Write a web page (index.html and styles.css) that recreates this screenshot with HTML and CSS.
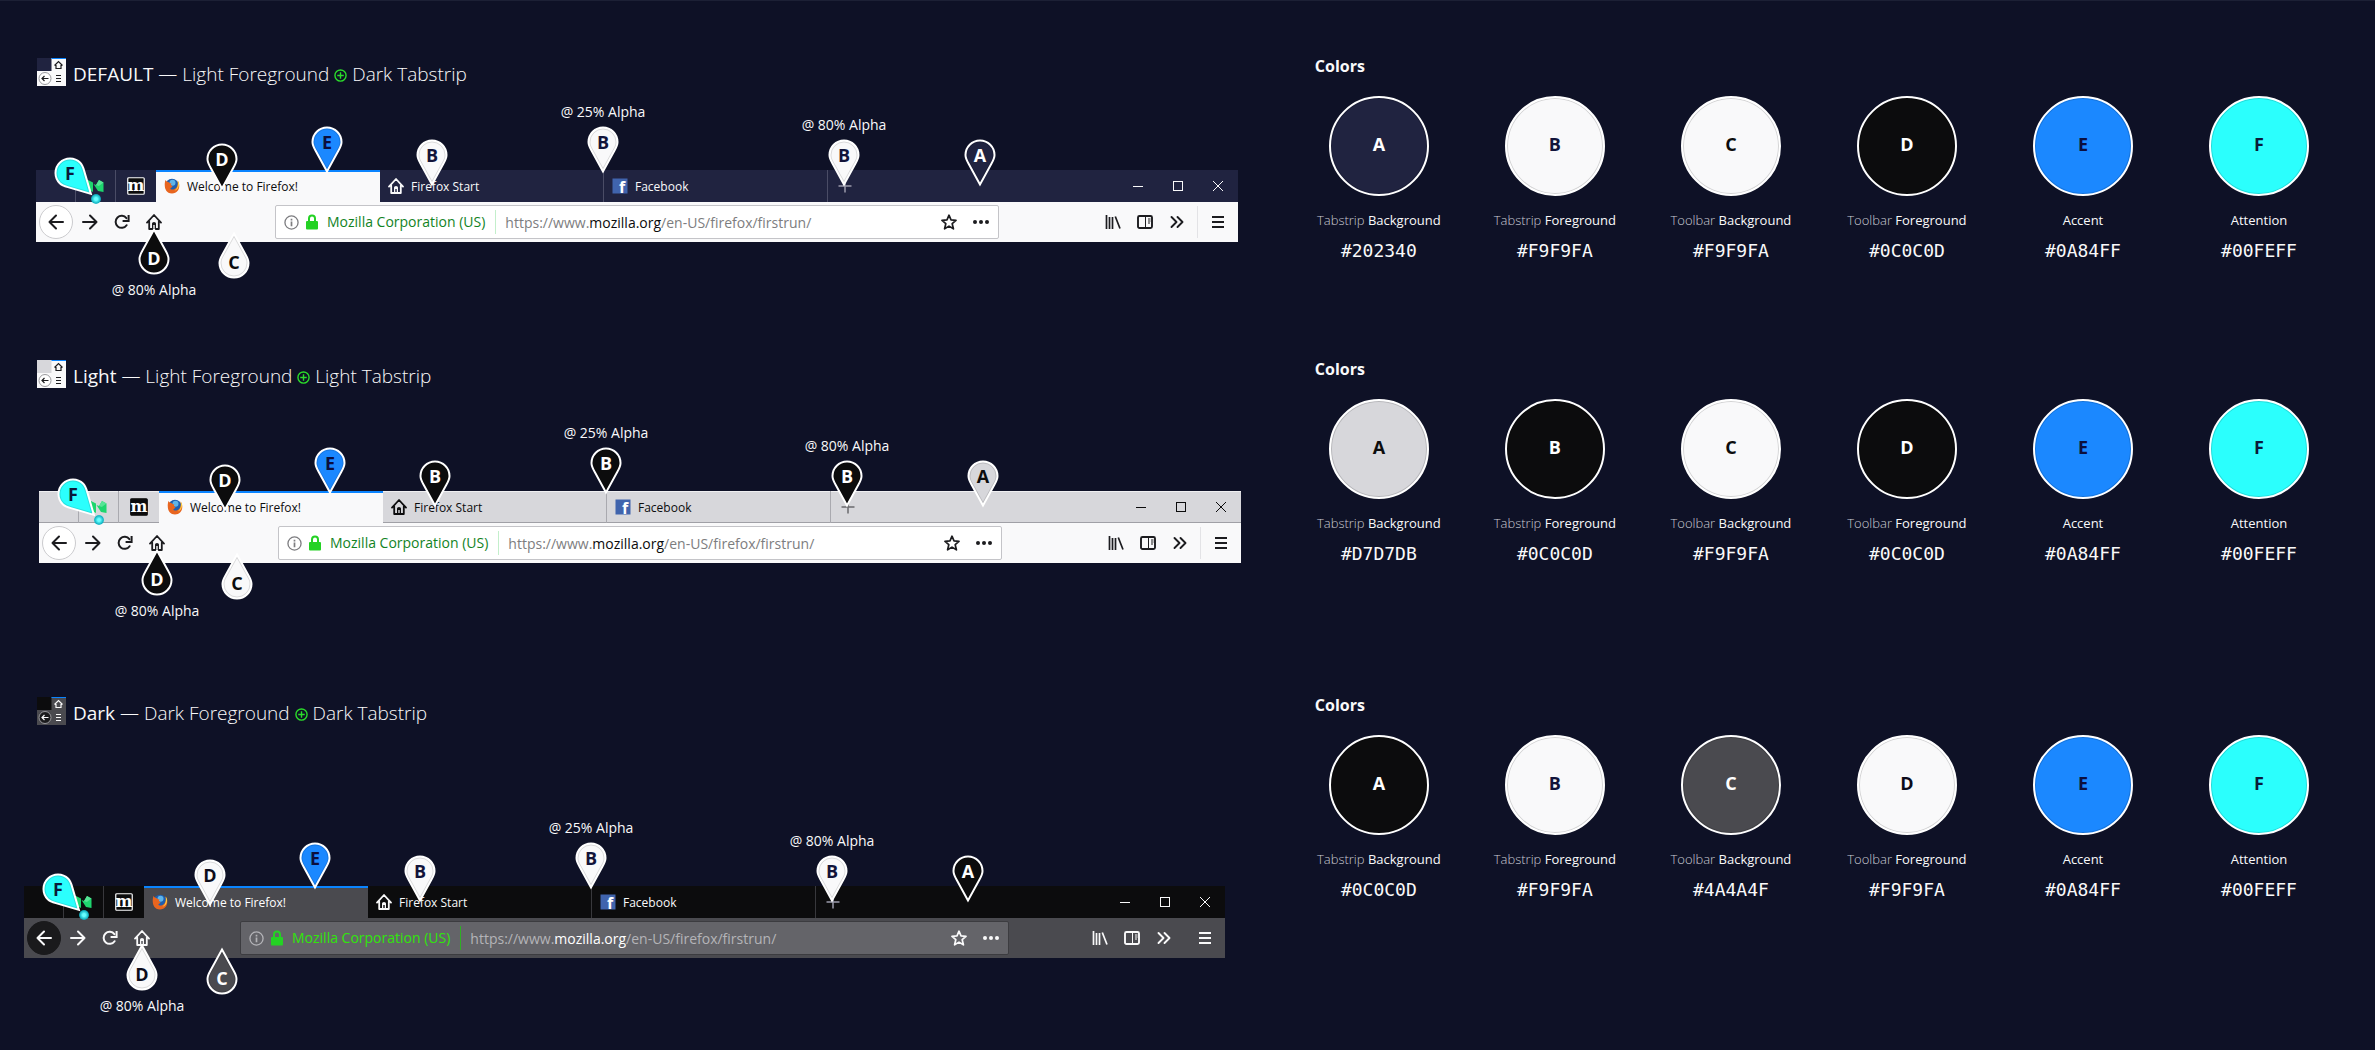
FILE: index.html
```
<!DOCTYPE html>
<html lang="en">
<head>
  <meta charset="UTF-8">
  <title>Themes</title>
  <meta name="viewport" content="width=device-width, initial-scale=1.0">
  <link rel="stylesheet" href="styles.css">
</head>
<body>
  <svg class="sprite" aria-hidden="true">
    <symbol id="back" viewBox="0 0 16 16"><path d="M15 8H1.5M8 1.5L1.5 8L8 14.5" fill="none" stroke="currentColor" stroke-width="2" stroke-linecap="round" stroke-linejoin="round"/></symbol>
    <symbol id="forward" viewBox="0 0 16 16"><path d="M1 8H14.5M8 1.5L14.5 8L8 14.5" fill="none" stroke="currentColor" stroke-width="2" stroke-linecap="round" stroke-linejoin="round"/></symbol>
    <symbol id="reload" viewBox="0 0 16 16"><path d="M12.6 11.2A6 6 0 1 1 12.4 4.2" fill="none" stroke="currentColor" stroke-width="2" stroke-linecap="round"/><path d="M14.6 1V7H8.6" fill="none" stroke="currentColor" stroke-width="2"/></symbol>
    <symbol id="home" viewBox="0 0 16 16"><path d="M1 8.6L8 1L15 8.6M3.2 7.5V15H12.8V7.5" fill="none" stroke="currentColor" stroke-width="1.8" stroke-linecap="round" stroke-linejoin="round"/><path d="M6 15V9.5Q6 8 8 8T10 9.5V15H8.7V11H7.3V15Z" fill="currentColor"/></symbol>
    <symbol id="info" viewBox="0 0 16 16"><circle cx="8" cy="8" r="7" fill="none" stroke="currentColor" stroke-width="1.4"/><path d="M8 7V12M8 4V5.8" stroke="currentColor" stroke-width="1.8"/></symbol>
    <symbol id="lock" viewBox="0 0 14 16"><rect x="1" y="7" width="12" height="8.5" rx="1" fill="currentColor"/><path d="M4 8V4.5A3 3 0 0 1 10 4.5V8" fill="none" stroke="currentColor" stroke-width="2"/></symbol>
    <symbol id="star" viewBox="0 0 16 16"><path d="M8 1.2L10 5.9L15 6.4L11.2 9.7L12.4 14.8L8 12.1L3.6 14.8L4.8 9.7L1 6.4L6 5.9Z" fill="none" stroke="currentColor" stroke-width="1.7" stroke-linejoin="round"/></symbol>
    <symbol id="dots" viewBox="0 0 16 16"><g fill="currentColor"><circle cx="2" cy="8" r="2"/><circle cx="8" cy="8" r="2"/><circle cx="14" cy="8" r="2"/></g></symbol>
    <symbol id="library" viewBox="0 0 16 16"><path d="M1.5 1V15M4.5 3V15M7.5 3V15M10.3 2.5L15 14.5" fill="none" stroke="currentColor" stroke-width="1.7"/></symbol>
    <symbol id="sidebar" viewBox="0 0 16 16"><rect x="1" y="2" width="14" height="12" rx="1.5" fill="none" stroke="currentColor" stroke-width="1.9"/><path d="M8.5 2V14M11 5H13.5M11 7H13.5M11 9H13" stroke="currentColor" stroke-width="1"/></symbol>
    <symbol id="chevrons" viewBox="0 0 16 16"><path d="M2.5 3L7.5 8L2.5 13M8.5 3L13.5 8L8.5 13" fill="none" stroke="currentColor" stroke-width="1.9" stroke-linecap="round" stroke-linejoin="round"/></symbol>
    <symbol id="menu" viewBox="0 0 16 16"><path d="M2 3H14M2 8H14M2 13H14" stroke="currentColor" stroke-width="2"/></symbol>
    <symbol id="plus" viewBox="0 0 16 16"><path d="M1.500 8H14.500M8 1.500V14.500" stroke="currentColor" stroke-width="1.500"/></symbol>
    <symbol id="win-min" viewBox="0 0 12 12"><path d="M1 6.500H11" stroke="currentColor"/></symbol>
    <symbol id="win-max" viewBox="0 0 12 12"><rect x="1.5" y="1.5" width="9" height="9" fill="none" stroke="currentColor"/></symbol>
    <symbol id="win-close" viewBox="0 0 12 12"><path d="M1 1L11 11M11 1L1 11" stroke="currentColor"/></symbol>
    <symbol id="oplus" viewBox="0 0 14 14"><path d="M7 1A6 6 0 1 0 7 13A6 6 0 1 0 7 1ZM7 3.5V10.5M3.5 7H10.5" fill="none" stroke="currentColor" stroke-width="1.5"/></symbol>
    <symbol id="medium" viewBox="0 0 16 16"><path d="M0 2L5 4.5V14L0 11.5ZM5.5 6L10 13L15.5 14V4.5L11 2L8 7Z" fill="#1ed66e"/><path d="M10.8 8L15.5 4.5L11 2L8 7Z" fill="#56e495"/></symbol>
    <symbol id="mdn" viewBox="0 0 18 18"><rect class="mdn-box" x=".75" y=".75" width="16.5" height="16.5" rx="1" fill="#0c0c0d" stroke-width="1.2"/><text x="9" y="13.5" text-anchor="middle" class="mdn-letter">m</text></symbol>
    <symbol id="firefox" viewBox="0 0 16 16"><circle cx="8" cy="7.5" r="6.8" fill="#1e5fb0"/><circle cx="8.5" cy="4.8" r="3" fill="#5fb4e8"/><path d="M1.5 2C0 6 0 15.5 8 15.5C15.5 15.5 17 6.5 13.5 2.5C14.5 6 13.5 10.5 9.5 11.5C6.500 12 5.5 10 7.5 9.5C8.5 9.2 9 8 7.5 7.5C6.5 7.2 7 6 7.5 5.500C5.5 5.5 4.8 4 3.5 3.8C2.8 3.6 2 3 1.5 2Z" fill="#e8651f"/><path d="M13.5 2.5C14.5 6 14 10 10.5 12.5C14 12 15.5 8 15 5C14.7 4 14.2 3.2 13.5 2.5Z" fill="#ffcf3f"/></symbol>
    <symbol id="facebook" viewBox="0 0 16 16"><rect x=".5" y=".5" width="15" height="15" fill="#4064ad"/><text x="10" y="15" text-anchor="middle" class="fb-letter">f</text></symbol>
    <symbol id="drop" viewBox="0 0 32 48"><path class="drop-edge" d="M16 45.5L4.5 24.5C2.500 21 1.5 19 1.5 16A14.5 14.5 0 0 1 30.5 16C30.5 19 29.5 21 27.5 24.5Z"/><path class="drop-line" d="M16 42.500L5.8 24C4 21 3 19 3 16A13 13 0 0 1 29 16C29 19 28 21 26.200 24Z"/></symbol>
    <symbol id="thumb" viewBox="0 0 29 28"><path class="thumb-bar" d="M0 0H29V28H0Z"/><path class="thumb-strip" d="M0 0H14.5V13H0Z"/><path d="M14.5 .5H29" stroke="#0a84ff"/><circle class="thumb-back" cx="8" cy="20.5" r="6"/><g fill="none" stroke="currentColor" stroke-width="1.2"><path d="M11.500 20.500H5M7.500 18L5 20.500L7.500 23M17.500 7.500L21.500 3.500L25.500 7.500M19 7V10.500H24V7M19 17.500H24M19 20.500H24M19 23.500H24"/></g></symbol>
  </svg>

  <main class="page">
    <!-- DEFAULT -->
    <section class="theme theme-default">
      <div class="preview">
        <h2 class="title"><svg class="thumb"><use href="#thumb"/></svg><span><b>DEFAULT</b> — Light Foreground <svg class="oplus"><use href="#oplus"/></svg> Dark Tabstrip</span></h2>
        <div class="browser">
          <div class="tabstrip">
            <span class="tab-gap"></span>
            <button class="tab tab-pinned" aria-label="Medium"><svg class="icon"><use href="#medium"/></svg></button>
            <button class="tab tab-pinned" aria-label="Mozilla"><svg class="icon icon-mdn"><use href="#mdn"/></svg></button>
            <button class="tab tab-active"><svg class="icon"><use href="#firefox"/></svg>Welcome to Firefox!</button>
            <button class="tab"><svg class="icon"><use href="#home"/></svg>Firefox Start</button>
            <button class="tab"><svg class="icon"><use href="#facebook"/></svg>Facebook</button>
            <button class="new-tab" aria-label="New tab"><svg class="icon"><use href="#plus"/></svg></button>
            <span class="window-buttons">
              <button aria-label="Minimize"><svg><use href="#win-min"/></svg></button>
              <button aria-label="Maximize"><svg><use href="#win-max"/></svg></button>
              <button aria-label="Close"><svg><use href="#win-close"/></svg></button>
            </span>
          </div>
          <div class="toolbar">
            <button class="tool tool-back" aria-label="Back"><svg class="icon"><use href="#back"/></svg></button>
            <button class="tool" aria-label="Forward"><svg class="icon"><use href="#forward"/></svg></button>
            <button class="tool" aria-label="Reload"><svg class="icon"><use href="#reload"/></svg></button>
            <button class="tool" aria-label="Home"><svg class="icon"><use href="#home"/></svg></button>
            <div class="urlbar">
              <svg class="info"><use href="#info"/></svg>
              <svg class="lock"><use href="#lock"/></svg>
              <span class="identity">Mozilla Corporation (US)</span>
              <span class="url">https://www.<b>mozilla.org</b>/en-US/firefox/firstrun/</span>
              <button class="tool" aria-label="Bookmark"><svg class="icon"><use href="#star"/></svg></button>
              <button class="tool" aria-label="Page actions"><svg class="icon"><use href="#dots"/></svg></button>
            </div>
            <button class="tool" aria-label="Library"><svg class="icon"><use href="#library"/></svg></button>
            <button class="tool" aria-label="Sidebars"><svg class="icon"><use href="#sidebar"/></svg></button>
            <button class="tool" aria-label="More tools"><svg class="icon"><use href="#chevrons"/></svg></button>
            <button class="tool tool-menu" aria-label="Menu"><svg class="icon"><use href="#menu"/></svg></button>
          </div>
          <i class="glow"></i>
          <span class="pin pin-attention f"><svg><use href="#drop"/></svg>F</span>
          <span class="pin pin-tab-text d"><svg><use href="#drop"/></svg>D</span>
          <span class="pin pin-accent e"><svg><use href="#drop"/></svg>E</span>
          <span class="pin pin-tab b"><svg><use href="#drop"/></svg>B</span>
          <span class="pin pin-separator b"><svg><use href="#drop"/></svg>B<small>@ 25% Alpha</small></span>
          <span class="pin pin-plus b"><svg><use href="#drop"/></svg>B<small>@ 80% Alpha</small></span>
          <span class="pin pin-strip a"><svg><use href="#drop"/></svg>A</span>
          <span class="pin pin-up pin-icon d"><svg><use href="#drop"/></svg>D<small>@ 80% Alpha</small></span>
          <span class="pin pin-up pin-bar c"><svg><use href="#drop"/></svg>C</span>
        </div>
      </div>
      <div class="palette">
        <h3>Colors</h3>
        <ul class="swatches">
          <li><span class="circle a">A</span><span class="name">Tabstrip <b>Background</b></span><code>#202340</code></li>
          <li><span class="circle b">B</span><span class="name">Tabstrip <b>Foreground</b></span><code>#F9F9FA</code></li>
          <li><span class="circle c">C</span><span class="name">Toolbar <b>Background</b></span><code>#F9F9FA</code></li>
          <li><span class="circle d">D</span><span class="name">Toolbar <b>Foreground</b></span><code>#0C0C0D</code></li>
          <li><span class="circle e">E</span><span class="name"><b>Accent</b></span><code>#0A84FF</code></li>
          <li><span class="circle f">F</span><span class="name"><b>Attention</b></span><code>#00FEFF</code></li>
        </ul>
      </div>
    </section>

    <!-- Light -->
    <section class="theme theme-light">
      <div class="preview">
        <h2 class="title"><svg class="thumb"><use href="#thumb"/></svg><span><b>Light</b> — Light Foreground <svg class="oplus"><use href="#oplus"/></svg> Light Tabstrip</span></h2>
        <div class="browser">
          <div class="tabstrip">
            <span class="tab-gap"></span>
            <button class="tab tab-pinned" aria-label="Medium"><svg class="icon"><use href="#medium"/></svg></button>
            <button class="tab tab-pinned" aria-label="Mozilla"><svg class="icon icon-mdn"><use href="#mdn"/></svg></button>
            <button class="tab tab-active"><svg class="icon"><use href="#firefox"/></svg>Welcome to Firefox!</button>
            <button class="tab"><svg class="icon"><use href="#home"/></svg>Firefox Start</button>
            <button class="tab"><svg class="icon"><use href="#facebook"/></svg>Facebook</button>
            <button class="new-tab" aria-label="New tab"><svg class="icon"><use href="#plus"/></svg></button>
            <span class="window-buttons">
              <button aria-label="Minimize"><svg><use href="#win-min"/></svg></button>
              <button aria-label="Maximize"><svg><use href="#win-max"/></svg></button>
              <button aria-label="Close"><svg><use href="#win-close"/></svg></button>
            </span>
          </div>
          <div class="toolbar">
            <button class="tool tool-back" aria-label="Back"><svg class="icon"><use href="#back"/></svg></button>
            <button class="tool" aria-label="Forward"><svg class="icon"><use href="#forward"/></svg></button>
            <button class="tool" aria-label="Reload"><svg class="icon"><use href="#reload"/></svg></button>
            <button class="tool" aria-label="Home"><svg class="icon"><use href="#home"/></svg></button>
            <div class="urlbar">
              <svg class="info"><use href="#info"/></svg>
              <svg class="lock"><use href="#lock"/></svg>
              <span class="identity">Mozilla Corporation (US)</span>
              <span class="url">https://www.<b>mozilla.org</b>/en-US/firefox/firstrun/</span>
              <button class="tool" aria-label="Bookmark"><svg class="icon"><use href="#star"/></svg></button>
              <button class="tool" aria-label="Page actions"><svg class="icon"><use href="#dots"/></svg></button>
            </div>
            <button class="tool" aria-label="Library"><svg class="icon"><use href="#library"/></svg></button>
            <button class="tool" aria-label="Sidebars"><svg class="icon"><use href="#sidebar"/></svg></button>
            <button class="tool" aria-label="More tools"><svg class="icon"><use href="#chevrons"/></svg></button>
            <button class="tool tool-menu" aria-label="Menu"><svg class="icon"><use href="#menu"/></svg></button>
          </div>
          <i class="glow"></i>
          <span class="pin pin-attention f"><svg><use href="#drop"/></svg>F</span>
          <span class="pin pin-tab-text d"><svg><use href="#drop"/></svg>D</span>
          <span class="pin pin-accent e"><svg><use href="#drop"/></svg>E</span>
          <span class="pin pin-tab b"><svg><use href="#drop"/></svg>B</span>
          <span class="pin pin-separator b"><svg><use href="#drop"/></svg>B<small>@ 25% Alpha</small></span>
          <span class="pin pin-plus b"><svg><use href="#drop"/></svg>B<small>@ 80% Alpha</small></span>
          <span class="pin pin-strip a"><svg><use href="#drop"/></svg>A</span>
          <span class="pin pin-up pin-icon d"><svg><use href="#drop"/></svg>D<small>@ 80% Alpha</small></span>
          <span class="pin pin-up pin-bar c"><svg><use href="#drop"/></svg>C</span>
        </div>
      </div>
      <div class="palette">
        <h3>Colors</h3>
        <ul class="swatches">
          <li><span class="circle a">A</span><span class="name">Tabstrip <b>Background</b></span><code>#D7D7DB</code></li>
          <li><span class="circle b">B</span><span class="name">Tabstrip <b>Foreground</b></span><code>#0C0C0D</code></li>
          <li><span class="circle c">C</span><span class="name">Toolbar <b>Background</b></span><code>#F9F9FA</code></li>
          <li><span class="circle d">D</span><span class="name">Toolbar <b>Foreground</b></span><code>#0C0C0D</code></li>
          <li><span class="circle e">E</span><span class="name"><b>Accent</b></span><code>#0A84FF</code></li>
          <li><span class="circle f">F</span><span class="name"><b>Attention</b></span><code>#00FEFF</code></li>
        </ul>
      </div>
    </section>

    <!-- Dark -->
    <section class="theme theme-dark">
      <div class="preview">
        <h2 class="title"><svg class="thumb"><use href="#thumb"/></svg><span><b>Dark</b> — Dark Foreground <svg class="oplus"><use href="#oplus"/></svg> Dark Tabstrip</span></h2>
        <div class="browser">
          <div class="tabstrip">
            <span class="tab-gap"></span>
            <button class="tab tab-pinned" aria-label="Medium"><svg class="icon"><use href="#medium"/></svg></button>
            <button class="tab tab-pinned" aria-label="Mozilla"><svg class="icon icon-mdn"><use href="#mdn"/></svg></button>
            <button class="tab tab-active"><svg class="icon"><use href="#firefox"/></svg>Welcome to Firefox!</button>
            <button class="tab"><svg class="icon"><use href="#home"/></svg>Firefox Start</button>
            <button class="tab"><svg class="icon"><use href="#facebook"/></svg>Facebook</button>
            <button class="new-tab" aria-label="New tab"><svg class="icon"><use href="#plus"/></svg></button>
            <span class="window-buttons">
              <button aria-label="Minimize"><svg><use href="#win-min"/></svg></button>
              <button aria-label="Maximize"><svg><use href="#win-max"/></svg></button>
              <button aria-label="Close"><svg><use href="#win-close"/></svg></button>
            </span>
          </div>
          <div class="toolbar">
            <button class="tool tool-back" aria-label="Back"><svg class="icon"><use href="#back"/></svg></button>
            <button class="tool" aria-label="Forward"><svg class="icon"><use href="#forward"/></svg></button>
            <button class="tool" aria-label="Reload"><svg class="icon"><use href="#reload"/></svg></button>
            <button class="tool" aria-label="Home"><svg class="icon"><use href="#home"/></svg></button>
            <div class="urlbar">
              <svg class="info"><use href="#info"/></svg>
              <svg class="lock"><use href="#lock"/></svg>
              <span class="identity">Mozilla Corporation (US)</span>
              <span class="url">https://www.<b>mozilla.org</b>/en-US/firefox/firstrun/</span>
              <button class="tool" aria-label="Bookmark"><svg class="icon"><use href="#star"/></svg></button>
              <button class="tool" aria-label="Page actions"><svg class="icon"><use href="#dots"/></svg></button>
            </div>
            <button class="tool" aria-label="Library"><svg class="icon"><use href="#library"/></svg></button>
            <button class="tool" aria-label="Sidebars"><svg class="icon"><use href="#sidebar"/></svg></button>
            <button class="tool" aria-label="More tools"><svg class="icon"><use href="#chevrons"/></svg></button>
            <button class="tool tool-menu" aria-label="Menu"><svg class="icon"><use href="#menu"/></svg></button>
          </div>
          <i class="glow"></i>
          <span class="pin pin-attention f"><svg><use href="#drop"/></svg>F</span>
          <span class="pin pin-tab-text d"><svg><use href="#drop"/></svg>D</span>
          <span class="pin pin-accent e"><svg><use href="#drop"/></svg>E</span>
          <span class="pin pin-tab b"><svg><use href="#drop"/></svg>B</span>
          <span class="pin pin-separator b"><svg><use href="#drop"/></svg>B<small>@ 25% Alpha</small></span>
          <span class="pin pin-plus b"><svg><use href="#drop"/></svg>B<small>@ 80% Alpha</small></span>
          <span class="pin pin-strip a"><svg><use href="#drop"/></svg>A</span>
          <span class="pin pin-up pin-icon d"><svg><use href="#drop"/></svg>D<small>@ 80% Alpha</small></span>
          <span class="pin pin-up pin-bar c"><svg><use href="#drop"/></svg>C</span>
        </div>
      </div>
      <div class="palette">
        <h3>Colors</h3>
        <ul class="swatches">
          <li><span class="circle a">A</span><span class="name">Tabstrip <b>Background</b></span><code>#0C0C0D</code></li>
          <li><span class="circle b">B</span><span class="name">Tabstrip <b>Foreground</b></span><code>#F9F9FA</code></li>
          <li><span class="circle c">C</span><span class="name">Toolbar <b>Background</b></span><code>#4A4A4F</code></li>
          <li><span class="circle d">D</span><span class="name">Toolbar <b>Foreground</b></span><code>#F9F9FA</code></li>
          <li><span class="circle e">E</span><span class="name"><b>Accent</b></span><code>#0A84FF</code></li>
          <li><span class="circle f">F</span><span class="name"><b>Attention</b></span><code>#00FEFF</code></li>
        </ul>
      </div>
    </section>
  </main>
</body>
</html>
```
FILE: styles.css
```
* { box-sizing: border-box; }
body {
  margin: 0;
  background: #0e1126;
  color: #f9f9fa;
  font-family: "Open Sans", "Noto Sans", sans-serif;
}
button {
  border: none; padding: 0; margin: 0;
  background: none;
  color: inherit;
  font: inherit;
  cursor: pointer;
}
h2, h3, ul { margin: 0; padding: 0; }
svg { display: block; flex: none; }
.sprite { display: none; }
.page { box-shadow: inset 0 1px 0 #1c2035; }

/* Themes */
.theme {
  display: grid;
  grid-template-columns: 11fr 9fr;
  padding-right: 28px;
  --line: #4a4c66;
  --a: #202340; --a-ink: #fff;
  --b: #f9f9fa; --b-ink: #12143a;
  --c: #f9f9fa; --c-ink: #0c0c0d;
  --d: #0c0c0d; --d-ink: #fff;
  --strip-text: #f9f9fa;
  --plus: #9a9bab;
  --icon: #1c1c1f;
  --back: #fff; --back-line: #cbcbce;
  --field: #fff; --field-line: #c4c4c8;
  --identity: #12831f; --identity-line: #c3efcb;
  --url: #7d7d80; --host: #0c0c0d;
}
.theme-light {
  --line: #a9a9af;
  --a: #d7d7db; --a-ink: #0c0c0d;
  --b: #0c0c0d; --b-ink: #fff;
  --strip-text: #0c0c0d;
  --plus: #6a6a6e;
}
.theme-dark {
  --line: #38383c;
  --a: #0c0c0d;
  --c: #4a4a4f; --c-ink: #fff;
  --d: #f9f9fa; --d-ink: #0c0c1a;
  --icon: #f9f9fa;
  --back: #1a1a1c; --back-line: #1a1a1c;
  --field: #646469; --field-line: #3c3c40;
  --identity: #30e60b; --identity-line: #2fae24;
  --url: #b4b4b8; --host: #fff;
}
.a { --fill: var(--a); --ink: var(--a-ink); }
.b { --fill: var(--b); --ink: var(--b-ink); }
.c { --fill: var(--c); --ink: var(--c-ink); }
.d { --fill: var(--d); --ink: var(--d-ink); }
.e { --fill: #1b88ff; --ink: #0b0f3d; }
.f { --fill: #2bfffd; --ink: #0a1a3a; }

/* Title */
.title {
  display: flex; align-items: center; gap: 7px;
  padding: 58px 0 0 37px;
  font-size: 19px;
  line-height: 28px;
  font-weight: 300;
}
.title span { margin: 2px 0 -2px; }
.title b { font-weight: 400; }
.thumb { width: 29px; height: 28px; color: var(--icon); }
.thumb-bar { fill: var(--c); }
.thumb-strip { fill: var(--a); }
.thumb-back { fill: var(--back); stroke: #9a9a9e; }
.oplus {
  display: inline-block;
  width: 13px; height: 13px;
  vertical-align: -1px;
  color: #2bdc2b;
}

/* Browser window */
.browser {
  position: relative;
  margin: 84px 53px 60px 36px;
}
.theme-light .browser { margin: 103px 50px 76px 39px; }
.theme-dark .browser { margin: 161px 66px 60px 24px; }
.tabstrip {
  display: flex;
  height: 32px;
  background: var(--a);
  color: var(--strip-text);
}
.theme-light .tabstrip { box-shadow: inset 0 1px 0 #efeff1, inset 0 -1px 0 #a0a0a6; }
.tab-gap { width: 40px; border-right: 1px solid var(--line); }
.tab {
  display: flex; align-items: center; gap: 7px;
  width: 224px;
  padding: 0 8px;
  border-right: 1px solid var(--line);
  font-size: 12px;
}
.tab-pinned { width: 40px; justify-content: center; padding: 0; }
.tab-pinned:has(+ .tab-active) { border-right-color: transparent; }
.tab-active {
  border-right: none;
  border-top: 2px solid #0a84ff;
  padding-bottom: 2px;
  background: var(--c);
  color: var(--host);
}
.icon { width: 16px; height: 16px; }
.icon-mdn { width: 18px; height: 18px; }
.mdn-box { stroke: var(--strip-text); }
.mdn-letter { font: bold 16px "DejaVu Serif", serif; fill: #fff; }
.fb-letter { font: bold 16px "Open Sans", sans-serif; fill: #fff; }
.new-tab { display: flex; align-items: center; justify-content: center; width: 33px; color: var(--plus); }
.window-buttons { display: flex; margin-left: auto; }
.window-buttons button { display: flex; align-items: center; justify-content: center; width: 40px; }
.window-buttons svg { width: 12px; height: 12px; }

/* Toolbar */
.toolbar {
  display: flex; align-items: center;
  height: 40px;
  padding-left: 3px;
  background: var(--c);
  color: var(--icon);
}
.tool { display: flex; align-items: center; justify-content: center; width: 32px; height: 32px; }
.tool-back {
  width: 34px; height: 34px;
  margin-right: 1px;
  border: 1px solid var(--back-line);
  border-radius: 50%;
  background: var(--back);
}
.tool-menu { width: 41px; border-left: 1px solid #e3e3e6; margin-left: 4px; }
.theme-dark .tool-menu { border-left-color: transparent; }
.urlbar {
  display: flex; align-items: center;
  flex: 1;
  height: 34px;
  margin: 0 98px 0 105px;
  padding: 0 1px 0 8px;
  border: 1px solid var(--field-line);
  border-radius: 2px;
  background: var(--field);
  font-size: 14px;
}
.theme-dark .urlbar { margin: 0 75px 0 82px; }
.info { width: 15px; height: 15px; color: var(--url); }
.lock { width: 14px; height: 16px; margin: 0 8px 0 6px; color: #24d224; }
.identity {
  padding-right: 10px;
  border-right: 1px solid var(--identity-line);
  line-height: 24px;
  color: var(--identity);
  white-space: nowrap;
}
.url { flex: 1; padding-left: 9px; color: var(--url); white-space: nowrap; }
.url b { font-weight: 400; color: var(--host); }

/* Pins over the window */
.pin {
  position: absolute;
  isolation: isolate;
  width: 32px; height: 48px;
  font-size: 18px;
  line-height: 32px;
  font-weight: 700;
  text-align: center;
  color: var(--ink);
}
.pin svg { position: absolute; z-index: -1; inset: 0; width: 32px; height: 48px; overflow: visible; }
.drop-edge { fill: var(--fill); stroke: #fff; stroke-width: 2; }
.drop-line { fill: none; stroke: rgba(0,0,0,0.12); stroke-width: 1; }
.pin-up { padding-top: 15px; }
.pin-up svg { transform: rotate(180deg); }
.pin-attention svg { transform: rotate(-45deg); transform-origin: 16px 16px; }
.pin small {
  position: absolute; left: 50%; bottom: calc(100% + 4px);
  transform: translateX(-50%);
  font-size: 14px;
  line-height: 20px;
  font-weight: 400;
  white-space: nowrap;
  color: #f9f9fa;
}
.pin-up small { bottom: auto; top: calc(100% + 5px); }
.pin-attention { left: 18px; top: -13px; }
.pin-tab-text { left: 170px; top: -27px; }
.pin-accent { left: 275px; top: -44px; }
.pin-tab { left: 380px; top: -31px; }
.pin-separator { left: 551px; top: -44px; }
.pin-plus { left: 792px; top: -31px; }
.pin-strip { left: 928px; top: -31px; }
.pin-icon { left: 102px; top: 57px; }
.pin-bar { left: 182px; top: 61px; }
.glow {
  position: absolute; left: 55px; top: 24px;
  width: 10px; height: 10px;
  border-radius: 50%;
  background: radial-gradient(circle, #6ff 20%, #12b5c4 60%, rgba(0,200,220,0.2) 100%);
}

/* Palette */
.palette { padding-top: 54px; }
.theme-light .palette { padding-top: 55px; }
.palette h3 { padding-left: 24px; font-size: 16px; line-height: 24px; font-weight: 700; }
.swatches {
  display: grid;
  grid-template-columns: repeat(6, 1fr);
  margin-top: 18px;
  list-style: none;
}
.swatches li { display: flex; flex-direction: column; align-items: center; }
.circle {
  width: 100px; height: 100px;
  border: 2px solid #fff;
  border-radius: 50%;
  box-shadow: inset 0 0 0 1px rgba(0,0,0,0.15);
  background: var(--fill);
  color: var(--ink);
  font-size: 18px;
  line-height: 93px;
  font-weight: 700;
  text-align: center;
}
.name { margin-top: 14px; font-size: 13px; line-height: 20px; font-weight: 300; color: #c9cad2; white-space: nowrap; }
.name b { font-weight: 400; color: #f9f9fa; }
.swatches code { margin-top: 10px; font: 18px/22px "DejaVu Sans Mono", monospace; }
```
